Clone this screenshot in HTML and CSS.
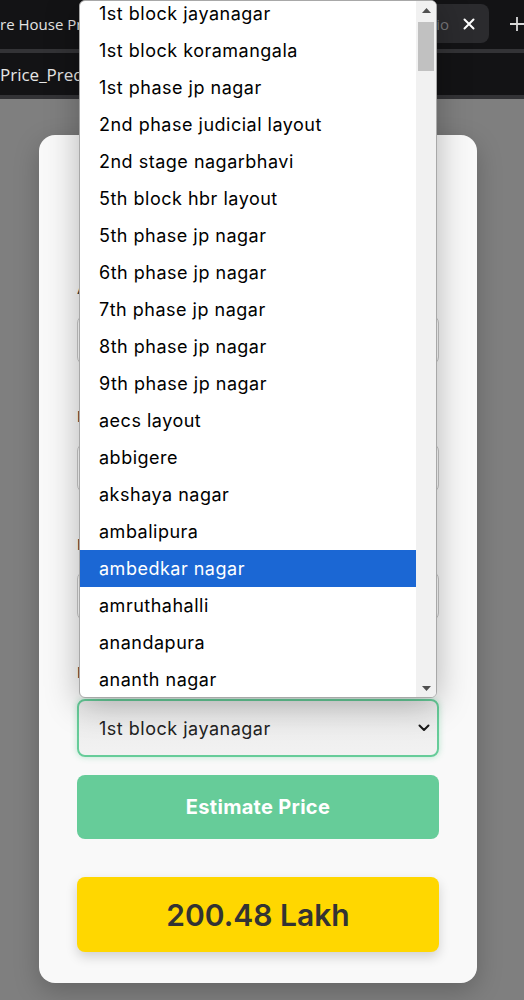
FILE: index.html
```html
<!DOCTYPE html>
<html lang="en">
<head>
<meta charset="utf-8">
<title>Bangalore House Price Prediction</title>
<link rel="stylesheet" href="styles.css">
</head>
<body>
<header class="chrome">
  <div class="tabstrip">
    <div class="tab tab-active"><span class="tab-title">re House Price Prediction</span></div>
    <div class="tab tab-hover">
      <div class="tab-fade"><span class="tab-title faded">Bangalore House Price Predictio</span></div>
      <svg class="tab-close" width="12" height="12" viewBox="0 0 12 12"><path d="M1.5 1.5 L10.5 10.5 M10.5 1.5 L1.5 10.5" stroke="#ffffff" stroke-width="2" stroke-linecap="round"/></svg>
    </div>
    <svg class="tab-new" width="14" height="14" viewBox="0 0 14 14"><path d="M7 0 V14 M0 7 H14" stroke="#d8d8d8" stroke-width="1.8"/></svg>
  </div>
  <div class="chrome-sep"></div>
  <div class="addressbar"><span class="addr-text">Price_Prediction</span></div>
  <div class="chrome-sep"></div>
</header>

<main class="page">
  <section class="card">
    <h2 class="card-title">Bangalore House Price Prediction</h2>
    <div class="field">
      <label class="field-label">Area (Square Feet)</label>
      <div class="field-input">1000</div>
    </div>
    <div class="field">
      <label class="field-label">BHK</label>
      <div class="field-input">2</div>
    </div>
    <div class="field">
      <label class="field-label">Bath</label>
      <div class="field-input">2</div>
    </div>
    <div class="field field-last">
      <label class="field-label">Location</label>
      <div class="select">
        <span class="select-value">1st block jayanagar</span>
        <svg class="select-chevron" width="12" height="8" viewBox="0 0 12 8"><path d="M1.5 1.5 L6 6 L10.5 1.5" fill="none" stroke="#1a1a1a" stroke-width="2" stroke-linecap="round" stroke-linejoin="round"/></svg>
      </div>
    </div>
    <button class="estimate">Estimate Price</button>
    <div class="result">200.48 Lakh</div>
  </section>
</main>

<div class="popup">
  <ul class="options">
    <li class="option">1st block jayanagar</li>
    <li class="option">1st block koramangala</li>
    <li class="option">1st phase jp nagar</li>
    <li class="option">2nd phase judicial layout</li>
    <li class="option">2nd stage nagarbhavi</li>
    <li class="option">5th block hbr layout</li>
    <li class="option">5th phase jp nagar</li>
    <li class="option">6th phase jp nagar</li>
    <li class="option">7th phase jp nagar</li>
    <li class="option">8th phase jp nagar</li>
    <li class="option">9th phase jp nagar</li>
    <li class="option">aecs layout</li>
    <li class="option">abbigere</li>
    <li class="option">akshaya nagar</li>
    <li class="option">ambalipura</li>
    <li class="option option-selected">ambedkar nagar</li>
    <li class="option">amruthahalli</li>
    <li class="option">anandapura</li>
    <li class="option">ananth nagar</li>
    <li class="option">anekal</li>
  </ul>
  <div class="scrollbar">
    <div class="scroll-arrow"><svg width="9" height="5" viewBox="0 0 9 5"><path d="M0 5 L4.5 0 L9 5 Z" fill="#505050"/></svg></div>
    <div class="scroll-thumb"></div>
    <div class="scroll-space"></div>
    <div class="scroll-arrow"><svg width="9" height="5" viewBox="0 0 9 5"><path d="M0 0 L4.5 5 L9 0 Z" fill="#505050"/></svg></div>
  </div>
</div>
</body>
</html>
```
FILE: styles.css
```css
* { box-sizing: border-box; }

body {
  margin: 0;
  background: #7f7f7f;
  font-family: "Inter", "Open Sans", sans-serif;
  height: 1000px;
  overflow: hidden;
}

/* browser chrome */
.chrome {
  background: #131315;
  font-family: "Open Sans", "Noto Sans", sans-serif;
}
.tabstrip {
  height: 49px;
  display: flex;
  align-items: flex-start;
  padding-top: 4px;
}
.tab {
  height: 39px;
  display: flex;
  align-items: center;
  border-radius: 8px;
  overflow: hidden;
}
.tab-active {
  width: 300px;
}
.tab-active .tab-title {
  color: #e4e4e4;
  font-size: 15px;
  white-space: nowrap;
}
.tab-hover {
  width: 191px;
  background: #2b2b2e;
  padding: 0 14px 0 12px;
  gap: 14px;
}
.tab-fade {
  flex: 1;
  min-width: 0;
  display: flex;
  justify-content: flex-end;
  overflow: hidden;
}
.tab-title.faded {
  color: #77777a;
  font-size: 15px;
  white-space: nowrap;
  flex: none;
}
.tab-close { flex: none; }
.tab-new {
  margin: 13px 0 0 21px;
  flex: none;
}
.chrome-sep {
  height: 4px;
  background: #333336;
}
.addressbar {
  height: 42px;
  display: flex;
  align-items: center;
}
.addr-text {
  color: #e6e6e6;
  font-size: 17px;
  white-space: nowrap;
}

/* page */
.page {
  padding: 36px 47px 0 39px;
}
.card {
  background: #f9f9f9;
  border-radius: 16px;
  padding: 38px 38px 31px;
  box-shadow: 0 8px 26px rgba(0, 0, 0, 0.22);
}
.card-title {
  margin: 0 0 38px;
  font-size: 26px;
  line-height: 34px;
  text-align: center;
  color: #333;
}
.field {
  margin-bottom: 42px;
}
.field-last {
  margin-bottom: 18px;
}
.field-label {
  display: block;
  font-size: 15px;
  line-height: 20px;
  margin-bottom: 16px;
  color: #3a3a3a;
  font-weight: 500;
}
.field-input {
  height: 50px;
  border: 1px solid #c8c8c8;
  border-radius: 8px;
  background: #fff;
  padding: 0 20px;
  display: flex;
  align-items: center;
  font-size: 17px;
}
.select {
  height: 58px;
  border: 2px solid #66cc99;
  border-radius: 8px;
  background: linear-gradient(#e9e9e9, #f2f2f2);
  box-shadow: 0 0 6px rgba(102, 204, 153, 0.45);
  display: flex;
  align-items: center;
  padding: 0 7px 0 20px;
}
.select-value {
  flex: 1;
  font-size: 18px;
  letter-spacing: 0.5px;
  color: #222;
}
.estimate {
  display: block;
  width: 100%;
  height: 64px;
  border: none;
  border-radius: 8px;
  background: #66cc99;
  color: #fff;
  font-family: inherit;
  font-size: 20px;
  letter-spacing: 0.3px;
  font-weight: 700;
  margin-bottom: 38px;
}
.result {
  height: 75px;
  border-radius: 8px;
  background: #ffd700;
  color: #333;
  font-size: 30px;
  font-weight: 600;
  display: flex;
  align-items: center;
  justify-content: center;
  box-shadow: 0 5px 12px rgba(0, 0, 0, 0.16);
}

/* open dropdown list (overlays the page) */
.popup {
  position: absolute;
  left: 79px;
  top: 0;
  width: 358px;
  height: 698px;
  background: #fff;
  border: 1px solid #a8a8a8;
  border-radius: 6px;
  overflow: hidden;
  display: flex;
  box-shadow: 0 6px 34px rgba(0, 0, 0, 0.28);
}
.options {
  list-style: none;
  margin: -6px 0 0;
  padding: 0;
  flex: 1;
}
.option {
  height: 37px;
  line-height: 37px;
  padding-left: 19px;
  font-size: 18px;
  letter-spacing: 0.5px;
  color: #000;
  white-space: nowrap;
}
.option-selected {
  background: #1b67d4;
  color: #fff;
}
.scrollbar {
  width: 20px;
  flex: none;
  background: #f1f1f1;
  display: flex;
  flex-direction: column;
  align-items: center;
}
.scroll-arrow {
  height: 18px;
  display: flex;
  align-items: center;
  justify-content: center;
}
.scroll-thumb {
  margin-top: 3px;
  width: 16px;
  height: 49px;
  background: #c1c1c1;
}
.scroll-space { flex: 1; }
```
